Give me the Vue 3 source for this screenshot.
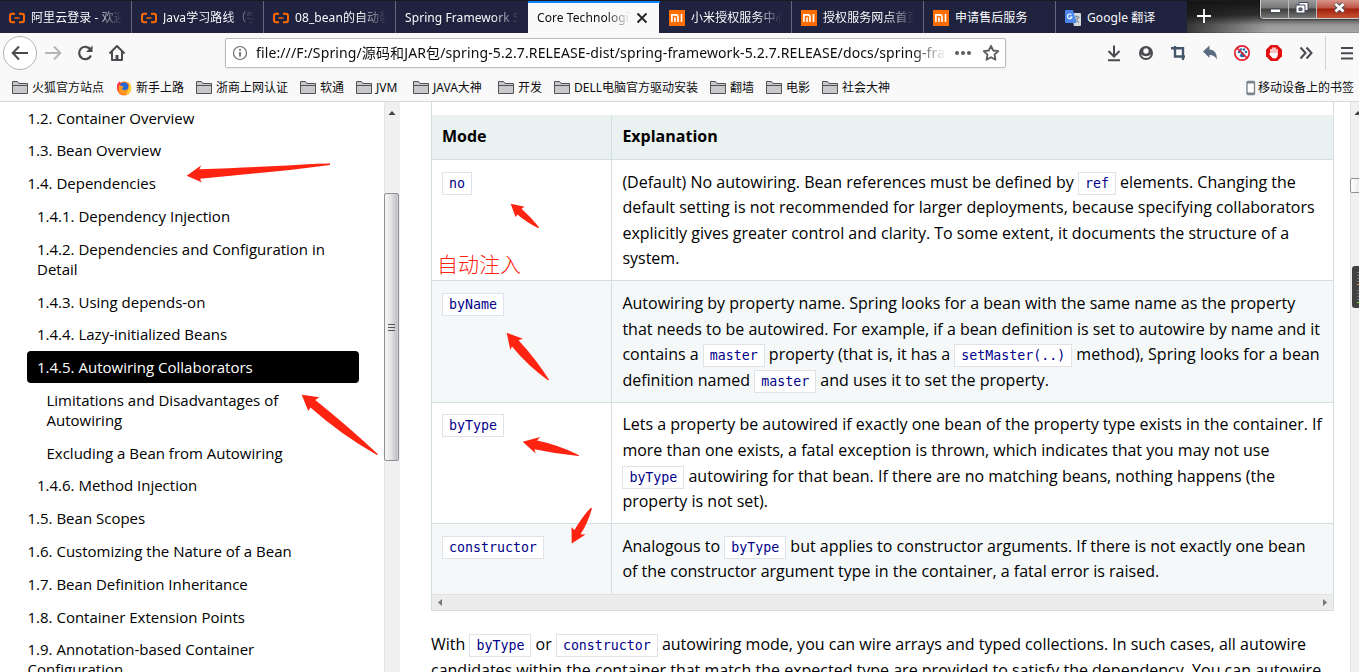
<script setup>
const tabs = [
  { icon: 'ali', text: '阿里云登录 - 欢迎' },
  { icon: 'ali', text: 'Java学习路线（学' },
  { icon: 'ali', text: '08_bean的自动装' },
  { icon: '', text: 'Spring Framework 5' },
  { icon: '', text: 'Core Technologi', active: true },
  { icon: 'mi', text: '小米授权服务中心' },
  { icon: 'mi', text: '授权服务网点首页' },
  { icon: 'mi', text: '申请售后服务' },
  { icon: 'g', text: 'Google 翻译' },
]
const bookmarks = [
  { t: '火狐官方站点', w: 104 },
  { t: '新手上路', w: 80, fox: true },
  { t: '浙商上网认证', w: 104 },
  { t: '软通', w: 56 },
  { t: 'JVM', w: 57 },
  { t: 'JAVA大神', w: 85 },
  { t: '开发', w: 56 },
  { t: 'DELL电脑官方驱动安装', w: 156 },
  { t: '翻墙', w: 56 },
  { t: '电影', w: 56 },
  { t: '社会大神', w: 80 },
]
const toc = [
  { l: 1, t: ['1.2. Container Overview'] },
  { l: 1, t: ['1.3. Bean Overview'] },
  { l: 1, t: ['1.4. Dependencies'] },
  { l: 2, t: ['1.4.1. Dependency Injection'] },
  { l: 2, t: ['1.4.2. Dependencies and Configuration in', 'Detail'] },
  { l: 2, t: ['1.4.3. Using depends-on'] },
  { l: 2, t: ['1.4.4. Lazy-initialized Beans'] },
  { l: 2, t: ['1.4.5. Autowiring Collaborators'], active: true },
  { l: 3, t: ['Limitations and Disadvantages of', 'Autowiring'] },
  { l: 3, t: ['Excluding a Bean from Autowiring'] },
  { l: 2, t: ['1.4.6. Method Injection'] },
  { l: 1, t: ['1.5. Bean Scopes'] },
  { l: 1, t: ['1.6. Customizing the Nature of a Bean'] },
  { l: 1, t: ['1.7. Bean Definition Inheritance'] },
  { l: 1, t: ['1.8. Container Extension Points'] },
  { l: 1, t: ['1.9. Annotation-based Container', 'Configuration'] },
]
</script>

<template>
  <div class="window">
    <header class="tabbar">
      <div v-for="(tab, i) in tabs" :key="i" class="tab" :class="{ active: tab.active, before: i === 3 }">
        <svg v-if="tab.icon === 'ali'" class="fav" viewBox="0 0 16 16">
          <path d="M6 3.800H3.200Q1 3.800 1 6v4q0 2.200 2.200 2.200H6M10 3.800h2.800q2.200 0 2.200 2.200v4q0 2.200-2.200 2.200H10" fill="none" stroke="#ff6a00" stroke-width="2" />
          <path d="M5.500 8h5" stroke="#ff6a00" stroke-width="1.400" />
        </svg>
        <svg v-if="tab.icon === 'mi'" class="fav" viewBox="0 0 16 16">
          <path d="M0 0h16v16H0z" fill="#ff6c00" />
          <path d="M2.900 12V4.900H7q2 0 2 2V12M6 7.300V12M12.500 4.100V12" fill="none" stroke="#fff" stroke-width="1.600" />
        </svg>
        <svg v-if="tab.icon === 'g'" class="fav" viewBox="0 0 16 16">
          <path d="M6 3h9q1 0 1 1v11q0 1-1 1H9z" fill="#d5d7da" />
          <path d="M8.500 7h6M11.500 5.500V7M13.500 7q-1 3.500-4 5M10 8.500q1.500 3 4 4" stroke="#6f7f91" fill="none" />
          <path d="M1 0h7l3.500 13H1q-1 0-1-1V1q0-1 1-1z" fill="#4a86ee" />
          <path d="M6.500 4.800A2.300 2.300 0 1 0 7 7H4.800" stroke="#fff" stroke-width="1.100" fill="none" />
        </svg>
        <span class="tabtext">{{ tab.text }}</span>
        <svg v-if="tab.active" class="close" viewBox="0 0 12 12"><path d="M1.500 1.500l9 9M10.500 1.500l-9 9" stroke="#222" stroke-width="1.800" /></svg>
      </div>
      <div class="glass">
        <svg class="plus" viewBox="0 0 14 14"><path d="M7 0v14M0 7h14" stroke="#fff" stroke-width="1.800" /></svg>
        <div class="caption">
          <span class="cap"><svg viewBox="0 0 28 18"><path d="M9.500 8h10v3.500h-10z" fill="#fff" stroke="#444b5b" /></svg></span>
          <span class="cap"><svg viewBox="0 0 28 18"><path d="M10 1.500h9v8h-9z" fill="#fff" stroke="#444b5b" /><path d="M7 4h9v8H7z" fill="#fff" stroke="#444b5b" /><path d="M10 7h3v2.500h-3z" fill="#777" stroke="#444b5b" /></svg></span>
          <span class="cap red"><svg viewBox="0 0 46 18"><path d="M18.500 3l8 7.500M26.500 3l-8 7.500" stroke="#454b58" stroke-width="4.600" /><path d="M18.500 3l8 7.500M26.500 3l-8 7.500" stroke="#fff" stroke-width="2.800" /></svg></span>
        </div>
      </div>
    </header>

    <nav class="toolbar">
      <svg class="navicons" viewBox="0 0 225 40">
        <circle cx="20" cy="20" r="16.500" fill="#fff" stroke="#b3b3b4" />
        <g fill="none" stroke="#4a4a4f" stroke-width="2">
          <path d="M28 20H13M19 13.500L12.700 20l6.300 6.500" />
          <path d="M45 20h15M54 13.500l6.300 6.500-6.300 6.500" stroke="#b5b5b6" />
          <path d="M90.500 16.500A6.200 6.200 0 1 0 91 22.500" stroke-width="2.200" />
          <path d="M92.500 12.500V19H86z" fill="#4a4a4f" stroke="none" />
          <path d="M109.500 20.500L117 13l7.500 7.500M112 18.500V27h10v-8.500" stroke-linejoin="round" />
          <path d="M117 27v-5" stroke-width="3" />
        </g>
      </svg>
      <div class="url">
        <svg class="info" viewBox="0 0 16 16"><circle cx="8" cy="8" r="6.500" fill="none" stroke="#6b6b6f" stroke-width="1.200" /><path d="M8 7v4.500M8 4v1.800" stroke="#6b6b6f" stroke-width="1.800" /></svg>
        <span class="address">file:///F:/Spring/源码和JAR包/spring-5.2.7.RELEASE-dist/spring-framework-5.2.7.RELEASE/docs/spring-fra</span>
        <svg class="urlicons" viewBox="0 0 52 28">
          <g fill="#5c5c60"><circle cx="4" cy="14" r="2" /><circle cx="10" cy="14" r="2" /><circle cx="16" cy="14" r="2" /></g>
          <path d="M38 6.800l2.200 4.700 5.100.6-3.800 3.500 1 5.100-4.500-2.500-4.500 2.500 1-5.100-3.800-3.500 5.100-.6z" fill="none" stroke="#5c5c60" stroke-width="1.800" stroke-linejoin="round" />
        </svg>
      </div>
      <svg class="tools" viewBox="0 0 259 40">
        <g fill="none" stroke="#4a4a4f" stroke-width="2">
          <path d="M14 12.500V23M8.500 18l5.500 5.500 5.500-5.500M8 27.300h12" />
          <circle cx="46" cy="20" r="7" fill="#4a4a4f" stroke="none" />
          <circle cx="46" cy="18" r="2.700" fill="#f9f9fa" stroke="none" />
          <path d="M41 21.300q1 3.700 5 3.700t5-3.700q-2 2-5 2t-5-2z" fill="#f9f9fa" stroke="none" />
          <path d="M71 15.300h12V27M75 13v10.500h10" stroke="#46566a" stroke-width="2.400" />
          <path d="M103 18.500l6.500-6v4q7.500.5 7.500 10-2.500-4.700-7.500-4.500v3z" fill="#596b80" stroke="none" />
          <circle cx="142" cy="20" r="7.200" fill="#fff" stroke="#e61c2c" stroke-width="1.700" />
          <g fill="#286fad" stroke="none"><circle cx="139" cy="19" r="1.300" /><circle cx="141" cy="16.500" r="1.300" /><circle cx="144" cy="16.500" r="1.300" /><circle cx="146" cy="19" r="1.300" /><path d="M142.500 18.500l3 4-1.500 1.700h-3l-1.500-1.700z" /></g>
          <path d="M137 15l10 10" stroke="#e61c2c" stroke-width="1.700" />
          <path d="M170.700 12h6.600l4.700 4.700v6.600l-4.700 4.700h-6.600l-4.700-4.700v-6.600z" fill="#e40d0d" stroke="none" />
          <path d="M171 16.500V21M173 15v6M175 15v6M177 16.500V21" stroke="#fff" stroke-width="1.500" stroke-linecap="round" />
          <path d="M170.200 20h7.500v2q-.5 3.500-3.500 3.500-2 0-5-4.500z" fill="#fff" stroke="none" />
          <path d="M200.500 14.500l5 5.500-5 5.500M206.500 14.500l5 5.500-5 5.500" />
          <path d="M225.500 3v34" stroke="#d2d2d4" stroke-width="1" />
          <path d="M241 15h12M241 20.300h12M241 25.600h12" />
        </g>
      </svg>
    </nav>

    <div class="bookmarks">
      <span v-for="b in bookmarks" :key="b.t" class="bm" :style="{ width: b.w + 'px' }">
        <svg v-if="b.fox" viewBox="0 0 16 16"><circle cx="8" cy="8.500" r="7" fill="#ff7b19" /><path d="M1 8Q.5 3.500 3.500 1.500L5.500 4 3 12z" fill="#ff304c" /><circle cx="8" cy="7" r="4.500" fill="#2067d8" /><path d="M3 5q3 1 5 1.500L6 8.500q1 3 5 1 3-2 1.500-7.500 4.500 5 1.800 9.500Q10 17 4.500 13 1.500 10 3 5z" fill="#ff9823" /><path d="M12.500 2q4.300 5 1.800 9.500-2 2.800-4 2.800Q14 9 12.500 2z" fill="#ffd736" /></svg>
        <svg v-else viewBox="0 0 16 16"><path d="M.5 13.500v-12h5l1.500 2h8.500v10z" fill="#c9c9cb" stroke="#515156" /><path d="M1 5.500h14" stroke="#515156" /></svg>
        <span class="bmt">{{ b.t }}</span>
      </span>
      <span class="mobile">
        <svg viewBox="0 0 10 16"><rect x="1" y="1.500" width="7.500" height="13" rx="1" fill="#fff" stroke="#7a838c" stroke-width="1.400" /><path d="M1 2.500h7.500M1 13.500h7.500" stroke="#7a838c" stroke-width="2" /></svg>
        <span class="bmt">移动设备上的书签</span>
      </span>
    </div>

    <div class="page">
      <aside class="toc">
        <div v-for="(item, i) in toc" :key="i" class="item" :class="['l' + item.l, { current: item.active }]">
          <div v-for="line in item.t" :key="line">{{ line }}</div>
        </div>
      </aside>
      <div class="vscroll">
        <svg class="uparrow" viewBox="0 0 16 16"><path d="M4.500 11L8 7l3.500 4z" fill="#444" /></svg>
        <div class="thumb"><i></i><i></i><i></i></div>
      </div>
      <main class="doc">
        <div class="tablebox">
          <div class="row head"><div class="c1">Mode</div><div class="c2">Explanation</div></div>
          <div class="row r1">
            <div class="c1"><code>no</code></div>
            <div class="c2">(Default) No autowiring. Bean references must be defined by <code>ref</code> elements. Changing the<br>default setting is not recommended for larger deployments, because specifying collaborators<br>explicitly gives greater control and clarity. To some extent, it documents the structure of a<br>system.</div>
          </div>
          <div class="row r2 even">
            <div class="c1"><code>byName</code></div>
            <div class="c2">Autowiring by property name. Spring looks for a bean with the same name as the property<br>that needs to be autowired. For example, if a bean definition is set to autowire by name and it<br>contains a <code>master</code> property (that is, it has a <code>setMaster(..)</code> method), Spring looks for a bean<br>definition named <code>master</code> and uses it to set the property.</div>
          </div>
          <div class="row r3">
            <div class="c1"><code>byType</code></div>
            <div class="c2">Lets a property be autowired if exactly one bean of the property type exists in the container. If<br>more than one exists, a fatal exception is thrown, which indicates that you may not use<br><code>byType</code> autowiring for that bean. If there are no matching beans, nothing happens (the<br>property is not set).</div>
          </div>
          <div class="row r4 even">
            <div class="c1"><code>constructor</code></div>
            <div class="c2">Analogous to <code>byType</code> but applies to constructor arguments. If there is not exactly one bean<br>of the constructor argument type in the container, a fatal error is raised.</div>
          </div>
          <div class="hscroll">
            <svg viewBox="0 0 16 15"><path d="M10 4v7L6 7.500z" fill="#777" /></svg>
            <svg viewBox="0 0 16 15"><path d="M6 4v7l4-3.500z" fill="#777" /></svg>
          </div>
        </div>
        <p class="para">With <code>byType</code> or <code>constructor</code> autowiring mode, you can wire arrays and typed collections. In such cases, all autowire<br>candidates within the container that match the expected type are provided to satisfy the dependency. You can autowire</p>
      </main>
      <div class="vscroll edge">
        <svg class="uparrow" viewBox="0 0 16 16"><path d="M4.500 11L8 7l3.500 4z" fill="#444" /></svg>
        <div class="smallthumb"></div>
      </div>
    </div>

    <div class="gauge">
      <svg viewBox="0 0 7 42"><path d="M5 6.500h2M5 9.500h2M5 12.500h2M5 15.500h2M5 24.500h2M5 27.500h2M5 30.500h2M5 33.500h2" stroke="#777" /><path d="M5 18.500h2" stroke="#ff9a1f" /><path d="M5 36.500h2" stroke="#8cf01c" /></svg>
    </div>
    <div class="note">自动注入</div>
    <svg class="arrows" viewBox="0 0 1359 672">
      <g fill="#ff2312">
        <path d="M186.700 175.700L201.300 165.300 199.300 169.300Q270 166.500 317 163.700L330 163.600V165L290 170 200 178.700 201.700 182.200z" />
        <path d="M301.700 394.700L319.300 397.300 315.300 400Q350 428 378 454.300L377 455Q340 434 310.500 407.500L308.300 411z" />
        <path d="M510.700 203.700L524.500 206.700 521.500 208.700Q532 218 539.200 227.500L538 228Q526 222 517.500 214.500L515.500 217z" />
        <path d="M506.700 332.700L522.900 338.700 518.500 340.200Q536 359 549 379.800L548 380.200Q528 366 512 346.500L510.300 350z" />
        <path d="M522.700 441.700L540.200 437 537 440.500Q559 445 579.200 455.200L578.500 456Q556 454 534.500 449.300L535.700 453.500z" />
        <path d="M571.700 543.500L571.500 527.300 574.500 530Q582 517 590.500 508L592 508.300Q588 523 580.500 534.300L585.500 534.500z" />
      </g>
    </svg>
  </div>
</template>

<style>
html, body { margin: 0; overflow: hidden; }
</style>

<style scoped>
.window { position: relative; width: 1359px; height: 672px; overflow: hidden; background: #fff; display: flex; flex-direction: column; font-family: "Noto Sans", "Noto Sans CJK SC", sans-serif; font-size: 12px; color: #0c0c0d; }
.window * { box-sizing: border-box; }
svg { display: block; flex: none; }
.tabbar { height: 33px; flex: none; display: flex; background: #202340; border-top: 1px solid #1b1b1d; }
.tab { width: 132px; flex: none; display: flex; align-items: center; padding: 0 9px; border-right: 1px solid #666880; color: #f9f9fa; }
.tab.before { border-right: 0; }
.tab.active { width: 132px; background: linear-gradient(#f9f9fa, #f9f9fa) 0 0 / 131px 100% no-repeat; color: #0c0c0d; border-right: 0; box-shadow: inset 0 2px #0a84ff; }
.tab:nth-child(9) { width: 131px; border-right: 0; }
.fav { width: 16px; height: 16px; margin-right: 6px; margin-top: 1px; }
.tabtext { flex: 1; min-width: 0; white-space: nowrap; overflow: hidden; letter-spacing: .08px; mask-image: linear-gradient(to right, #000 calc(100% - 26px), transparent); }
.close { width: 12px; height: 12px; margin: 2px 3px 0 5px; }
.tab:nth-child(8) .tabtext, .tab:nth-child(9) .tabtext { mask-image: none; }
.glass { flex: 1; display: flex; justify-content: space-between; background: linear-gradient(90deg, rgba(20,20,20,.75), transparent 80px), linear-gradient(#161616 0, #303030 14px, #606060 19px, #989898 24px, #a5a5a8 31px, #777 32px); }
.plus { width: 14px; height: 14px; margin: 8px 0 0 10px; }
.caption { display: flex; width: 99px; height: 19px; margin-top: -1px; border: 1px solid #ccc; border-top: 0; border-right: 0; border-radius: 0 0 0 4px; overflow: hidden; box-shadow: 0 0 2px #000; }
.cap { width: 28px; flex: none; padding-top: 1px; background: linear-gradient(#9b9b9b, #777 8px, #3b3b3b 9px, #777); border-right: 1px solid #bbb; }
.cap svg { width: 28px; height: 18px; }
.cap.red { width: 46px; background: linear-gradient(#d8958b, #bd5444 8px, #a11f0a 9px, #c65234); }
.cap.red svg { width: 46px; }
.toolbar { height: 40px; flex: none; display: flex; align-items: center; background: #f9f9fa; }
.navicons { width: 225px; height: 40px; }
.url { width: 781px; height: 30px; flex: none; border: 1px solid #bcbcbd; border-radius: 2px; background: #fff; display: flex; align-items: center; padding-left: 6px; box-shadow: 0 1px 3px rgba(0,0,0,.07); }
.info { width: 16px; height: 16px; margin-right: 8px; }
.address { width: 690px; flex: none; overflow: hidden; white-space: nowrap; font-size: 14px; line-height: 26px; letter-spacing: .12px; mask-image: linear-gradient(to right, #000 95%, transparent); }
.urlicons { width: 52px; height: 28px; margin-left: 7px; }
.tools { width: 259px; height: 40px; margin-left: 94px; }
.bookmarks { height: 29px; flex: none; display: flex; align-items: center; padding-left: 12px; background: #f9f9fa; border-bottom: 1px solid #d9d9dc; }
.bm { display: flex; align-items: center; flex: none; white-space: nowrap; }
.bm svg { width: 16px; height: 16px; margin-top: 1px; margin-right: 4px; }
.bmt { line-height: 18px; padding-top: 2px; white-space: nowrap; }
.mobile { display: flex; align-items: center; margin-left: auto; margin-right: 5px; }
.mobile svg { width: 10px; height: 16px; margin-right: 2px; margin-top: 1px; }
.page { flex: 1; min-height: 0; display: flex; overflow: hidden; font-family: "Open Sans", "Noto Sans", sans-serif; color: #000; }
.toc { width: 384px; flex: none; padding-left: 27px; margin-top: -.5px; font-size: 15px; line-height: 20px; white-space: nowrap; }
.item { width: 332px; padding: 6.100px 0 5.900px .5px; margin-bottom: .8px; border-radius: 4px; }
.l2 { padding-left: 10px; }
.l3 { padding-left: 19.500px; }
.current { background: #000; color: #fff; }
.vscroll { width: 16px; flex: none; background: #f0f0f0; box-shadow: inset 1px 0 #e4e4e4; display: flex; flex-direction: column; }
.uparrow { width: 16px; height: 16px; margin-top: 2px; }
.thumb { margin-top: 73px; height: 268px; width: 15px; border: 1px solid #909094; border-radius: 2px; background: linear-gradient(90deg, #f5f5f5, #e5e5e7 45%, #c2c2c8 90%, #d6d6d9); display: flex; flex-direction: column; align-items: center; justify-content: center; gap: 2px; }
.thumb i { width: 7px; height: 1px; background: #555; }
.doc { width: 950px; flex: none; padding-left: 31px; font-size: 16px; line-height: 25.600px; white-space: nowrap; }
.tablebox { width: 903px; border: 1px solid #d3dfde; border-top: 0; padding-top: 13px; }
.row { display: flex; border-bottom: 1px solid #d3dfde; }
.c1 { width: 180px; flex: none; border-right: 1px solid #d3dfde; padding: 9.600px 10px 0; }
.c2 { flex: 1; padding: 9.600px 10px 0 10.400px; }
.head { height: 45px; background: #e9f2f1; font-weight: 700; }
.head .c1, .head .c2 { padding-top: 9px; }
.r1, .r3 { height: 121px; }
.r2 { height: 122px; }
.r2 .c1, .r2 .c2 { padding-top: 10px; }
.r3 .c1, .r3 .c2 { padding-top: 9.400px; }
.r4 { height: 70px; border-bottom: 0; }
.even { background: #f4f8f9; }
code { display: inline-block; height: 23px; line-height: 21px; vertical-align: 0; margin: -5px 0; padding: 0 6px; border: 1px solid #e1e1e8; background: #fff; color: #00008b; font-family: "DejaVu Sans Mono", monospace; font-size: 13.270px; }
.hscroll { height: 16px; background: #ececec; border-top: 1px solid #e1e1e1; display: flex; justify-content: space-between; }
.hscroll svg { width: 16px; height: 15px; }
.para { margin: 21px 0 0; }
.edge { width: 9px; overflow: hidden; }
.smallthumb { width: 15px; height: 15px; margin-top: 58px; border: 1px solid #909094; border-radius: 2px; background: linear-gradient(90deg, #fff, #ddd); }
.gauge { position: absolute; left: 1352px; top: 266px; width: 7px; height: 42px; background: #414141; border-radius: 3px 0 0 3px; overflow: hidden; }
.gauge svg { width: 7px; height: 42px; }
.note { position: absolute; left: 437px; top: 249px; color: #ff2312; font-family: "Noto Sans CJK SC", sans-serif; font-weight: 300; font-size: 21px; line-height: 28px; }
.arrows { position: absolute; left: 0; top: 0; width: 1359px; height: 672px; pointer-events: none; }
</style>
